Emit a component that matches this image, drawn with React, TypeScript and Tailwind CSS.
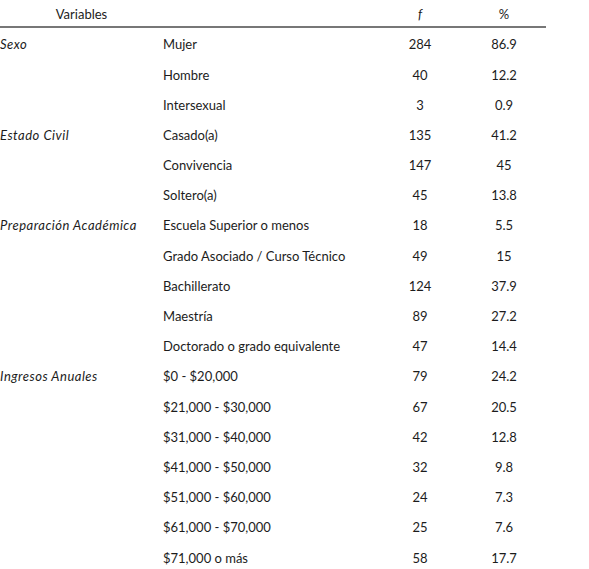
const rows: [string, string, string, string][] = [
  ["Sexo", "Mujer", "284", "86.9"],
  ["", "Hombre", "40", "12.2"],
  ["", "Intersexual", "3", "0.9"],
  ["Estado Civil", "Casado(a)", "135", "41.2"],
  ["", "Convivencia", "147", "45"],
  ["", "Soltero(a)", "45", "13.8"],
  ["Preparación Académica", "Escuela Superior o menos", "18", "5.5"],
  ["", "Grado Asociado / Curso Técnico", "49", "15"],
  ["", "Bachillerato", "124", "37.9"],
  ["", "Maestría", "89", "27.2"],
  ["", "Doctorado o grado equivalente", "47", "14.4"],
  ["Ingresos Anuales", "$0 - $20,000", "79", "24.2"],
  ["", "$21,000 - $30,000", "67", "20.5"],
  ["", "$31,000 - $40,000", "42", "12.8"],
  ["", "$41,000 - $50,000", "32", "9.8"],
  ["", "$51,000 - $60,000", "24", "7.3"],
  ["", "$61,000 - $70,000", "25", "7.6"],
  ["", "$71,000 o más", "58", "17.7"],
];

export default function App() {
  return (
    <div className="min-h-[569px] w-[589px] bg-white font-['Lato',sans-serif] text-[13px] text-[#1c1c1c]">
      <div className="w-[546px]">
        <div className="grid h-[28px] grid-cols-[163px_215px_84px_84px] items-center border-b-2 border-[#777] pt-[3px]">
          <div className="text-center">Variables</div>
          <div />
          <div className="text-center italic">f</div>
          <div className="text-center">%</div>
        </div>
        <div className="pt-[2px]">
          {rows.map(([cat, opt, f, pct], i) => (
            <div
              key={i}
              className="grid h-[30.2px] grid-cols-[163px_215px_84px_84px] items-center"
            >
              <div className="italic tracking-[0.5px]">{cat}</div>
              <div>{opt}</div>
              <div className="text-center">{f}</div>
              <div className="text-center">{pct}</div>
            </div>
          ))}
        </div>
      </div>
    </div>
  );
}
